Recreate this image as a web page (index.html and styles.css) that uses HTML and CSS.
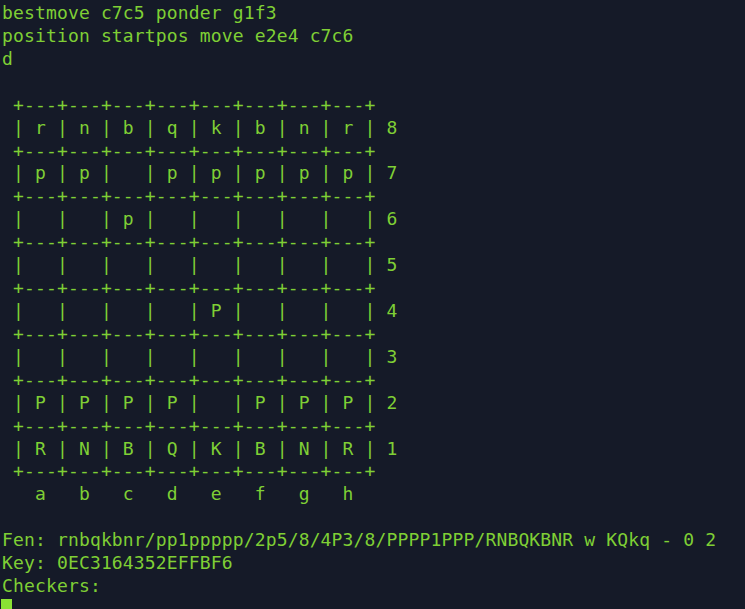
FILE: index.html
```html
<!DOCTYPE html>
<html>
<head>
<meta charset="utf-8">
<link rel="stylesheet" href="styles.css">
</head>
<body>
<pre class="term">bestmove c7c5 ponder g1f3
position startpos move e2e4 c7c6
d

 +---+---+---+---+---+---+---+---+
 | r | n | b | q | k | b | n | r | 8
 +---+---+---+---+---+---+---+---+
 | p | p |   | p | p | p | p | p | 7
 +---+---+---+---+---+---+---+---+
 |   |   | p |   |   |   |   |   | 6
 +---+---+---+---+---+---+---+---+
 |   |   |   |   |   |   |   |   | 5
 +---+---+---+---+---+---+---+---+
 |   |   |   |   | P |   |   |   | 4
 +---+---+---+---+---+---+---+---+
 |   |   |   |   |   |   |   |   | 3
 +---+---+---+---+---+---+---+---+
 | P | P | P | P |   | P | P | P | 2
 +---+---+---+---+---+---+---+---+
 | R | N | B | Q | K | B | N | R | 1
 +---+---+---+---+---+---+---+---+
   a   b   c   d   e   f   g   h

Fen: rnbqkbnr/pp1ppppp/2p5/8/4P3/8/PPPP1PPP/RNBQKBNR w KQkq - 0 2
Key: 0EC3164352EFFBF6
Checkers:
<span class="cursor"></span></pre>
</body>
</html>
```
FILE: styles.css
```css
html, body {
  margin: 0;
  padding: 0;
  background: #151a28;
  height: 100%;
  overflow: hidden;
}
.term {
  margin: 0;
  padding: 2px 0 0 2px;
  font-family: "DejaVu Sans Mono", monospace;
  font-size: 18px;
  line-height: 22.92px;
  letter-spacing: 0.15px;
  color: #7fcf35;
  white-space: pre;
}
.cursor {
  display: inline-block;
  vertical-align: top;
  width: 11px;
  height: 22px;
  margin-left: -1px;
  margin-top: 1px;
  background: #8ae234;
}
```
